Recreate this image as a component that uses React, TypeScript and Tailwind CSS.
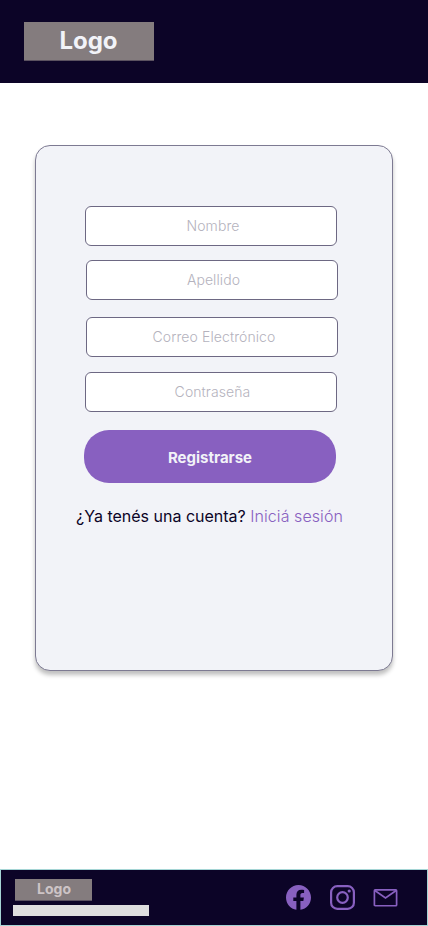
const fields = [
  { label: 'Nombre', type: 'text', place: 'ml-[49px] mt-[60px] pl-1' },
  { label: 'Apellido', type: 'text', place: 'ml-[50px] mt-[14px] pl-[3px]' },
  { label: 'Correo Electrónico', type: 'email', place: 'ml-[50px] mt-[17px] pl-1' },
  { label: 'Contraseña', type: 'password', place: 'ml-[49px] mt-[15px] pl-[3px]' },
];

function Header() {
  return (
    <header className="flex h-[83px] shrink-0 items-start bg-[#0c0427] pl-6 pt-[22px]">
      <div className="flex h-[39px] w-[130px] justify-center border-b border-[#5b5260] bg-[#847c7e] pr-px text-[24px] leading-[37px] font-bold text-[#f2f3f8]">
        Logo
      </div>
    </header>
  );
}

function RegisterCard() {
  return (
    <form className="ml-[35px] mt-[62px] flex h-[526px] w-[358px] flex-col rounded-[15px] border border-[#7d7a92] bg-[#f2f3f8] shadow-[0_4px_4px_rgba(0,0,0,0.25)]">
      {fields.map((f) => (
        <input
          key={f.label}
          type={f.type}
          placeholder={f.label}
          className={`h-10 w-[252px] shrink-0 rounded-[6px] border border-[#6d6883] bg-white pb-[2px] text-center text-[14px] font-light tracking-[0.09px] placeholder:text-[#b4b2bd] ${f.place}`}
        />
      ))}
      <button
        type="button"
        className="ml-12 mt-[18px] h-[53px] w-[252px] shrink-0 rounded-[25px] bg-[#8860c0] pt-[3px] text-[15px] font-bold text-[#f2f3f8]"
      >
        Registrarse
      </button>
      <p className="ml-10 mt-[21px] whitespace-nowrap text-[16px] leading-6 text-[#0c0427]">
        ¿Ya tenés una cuenta? <a className="font-light tracking-[0.07px] text-[#8860c0]">Iniciá sesión</a>
      </p>
    </form>
  );
}

function Footer() {
  return (
    <footer className="mt-auto flex h-[57px] shrink-0 justify-between border border-[#a5d5d5] bg-[#0c0427]">
      <div className="flex flex-col pl-3 pt-[9px]">
        <div className="ml-[2px] flex h-[22px] w-[77px] justify-center border-b border-[#5b5260] bg-[#847c7e] pl-px text-[14px] leading-[20px] font-bold text-[#cdc4c6]">
          Logo
        </div>
        <div className="mt-1 h-[11px] w-[136px] bg-[#dedede]" />
      </div>
      <div className="flex items-start pr-[29px] pt-[15px] text-[#8860c0]">
        <svg width="25" height="25" viewBox="0 0 25 25" fill="currentColor">
          <path d="M25 12.5C25 5.6 19.4 0 12.5 0S0 5.6 0 12.5C0 18.7 4.5 23.9 10.4 24.85V15.9H7.3V12.4h3.1V9.8c0-3.3 1.9-5.1 4.8-5.1 1.1 0 2.1.1 2.9.25v3.1h-1.6c-1.6 0-2.1 1-2.1 2v2.35h3.5l-.55 3.5h-2.95v8.95C20.5 23.9 25 18.7 25 12.5Z" />
        </svg>
        <svg className="ml-[19px]" width="25" height="25" viewBox="0 0 25 25" fill="none" stroke="currentColor" strokeWidth="2.2">
          <rect x="1.1" y="1.1" width="22.8" height="22.8" rx="6.2" />
          <circle cx="12.5" cy="12.5" r="5.3" />
          <circle cx="19.2" cy="6" r="1.6" fill="currentColor" stroke="none" />
        </svg>
        <svg className="ml-[18px] mt-1" width="25" height="18" viewBox="0 0 25 18" fill="none" stroke="currentColor" strokeWidth="1.7">
          <rect x="1.4" y="0.85" width="22.2" height="15.9" rx="0.8" />
          <path d="M1.5 1.2 12.5 8.9l11-7.7" />
        </svg>
      </div>
    </footer>
  );
}

export default function App() {
  return (
    <div className="flex h-[926px] w-[428px] flex-col overflow-hidden bg-white font-[Inter,sans-serif]">
      <Header />
      <RegisterCard />
      <Footer />
    </div>
  );
}
